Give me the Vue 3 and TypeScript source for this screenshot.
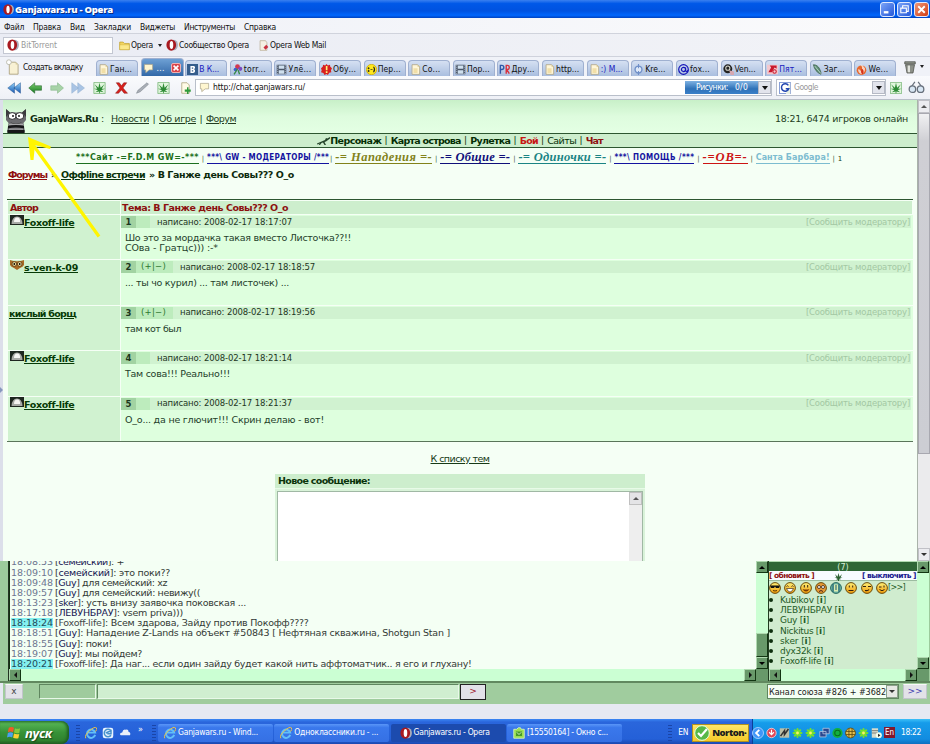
<script setup lang="ts">
type Seg = { t: string; w: number; c?: string }

// Spreads the letters of a label so that it takes exactly the given width.
const vFit = {
  mounted(el: HTMLElement, binding: { value: number }) {
    const n = (el.textContent ?? '').trim().length
    const w = el.getBoundingClientRect().width
    if (n > 0) el.style.letterSpacing = `${(binding.value - w) / n}px`
  },
}

const menu: Seg[] = [
  { t: 'Файл', w: 20 }, { t: 'Правка', w: 28 }, { t: 'Вид', w: 15 }, { t: 'Закладки', w: 37 },
  { t: 'Виджеты', w: 35 }, { t: 'Инструменты', w: 51 }, { t: 'Справка', w: 32 },
]

const tabs: { t: string; icon: string; w: number; c?: string }[] = [
  { t: 'Ган...', icon: 'page', w: 22 }, { t: '...', icon: 'bubble', w: 8, c: 'active' },
  { t: 'В К...', icon: 'vk', w: 20, c: 'unread' }, { t: 'torr...', icon: 'flower', w: 22 },
  { t: 'Улё...', icon: 'film', w: 23 }, { t: 'Обу...', icon: 'alert', w: 23 },
  { t: 'Пер...', icon: 'smile', w: 23 }, { t: 'Со...', icon: 'page', w: 18 },
  { t: 'Пор...', icon: 'film', w: 23 }, { t: 'Дру...', icon: 'pr', w: 23 },
  { t: 'http...', icon: 'page', w: 23 }, { t: ':) M...', icon: 'page', w: 22, c: 'unread' },
  { t: 'Kre...', icon: 'ring', w: 20 }, { t: 'fox...', icon: 'at', w: 20 },
  { t: 'Ven...', icon: 'eye', w: 21 }, { t: 'Пят...', icon: 'redo', w: 23, c: 'unread' },
  { t: 'Заг...', icon: 'feather', w: 21 }, { t: 'We...', icon: 'flame', w: 20 },
]

const nav: Seg[] = [
  { t: 'Персонаж', w: 51 }, { t: 'Карта острова', w: 70 }, { t: 'Рулетка', w: 40 },
  { t: 'Бой', w: 18, c: 'red' }, { t: 'Сайты', w: 29, c: 'thin' }, { t: 'Чат', w: 17, c: 'dred' },
]

const links: Seg[] = [
  { t: '***Сайт -=F.D.M GW=-***', w: 123, c: 'l-green' },
  { t: '***\\ GW - МОДЕРАТОРЫ /***', w: 122, c: 'l-blue tight' },
  { t: '-= Нападения =-', w: 97, c: 'l-olive' },
  { t: '-= Общие =-', w: 70, c: 'l-navy' },
  { t: '-= Одиночки =-', w: 88, c: 'l-teal' },
  { t: '***\\ ПОМОЩЬ /***', w: 80, c: 'l-blue' },
  { t: '-=ОВ=-', w: 45, c: 'l-red' },
  { t: 'Санта Барбара!', w: 74, c: 'l-sky' },
]

const posts: { nick: string; w: number; av: string; vote: boolean; time: string; text: Seg[] }[] = [
  { nick: 'Foxoff-life', w: 50, av: 'hood', vote: false, time: '18:17:07', text: [{ t: 'Шо это за мордачка такая вместо Листочка??!!', w: 226 }, { t: 'СОва - Гратцс))) :-*', w: 93 }] },
  { nick: 's-ven-k-09', w: 54, av: 'owlet', vote: true, time: '18:18:57', text: [{ t: '... ты чо курил) ... там листочек) ...', w: 164 }] },
  { nick: 'кислый борщ', w: 67, av: '', vote: true, time: '18:19:56', text: [{ t: 'там кот был', w: 56 }] },
  { nick: 'Foxoff-life', w: 50, av: 'hood', vote: false, time: '18:21:14', text: [{ t: 'Там сова!!! Реально!!!', w: 105 }] },
  { nick: 'Foxoff-life', w: 50, av: 'hood', vote: false, time: '18:21:37', text: [{ t: 'О_о... да не глючит!!! Скрин делаю - вот!', w: 199 }] },
]

const chat: { time: string; who: string; msg: string; w: number; hi?: boolean }[] = [
  { time: '18:08:53', who: 'семейский', msg: ': +', w: 69 },
  { time: '18:09:10', who: 'семейский', msg: ': это поки??', w: 115 },
  { time: '18:09:48', who: 'Guy', msg: ' для семейский: xz', w: 112 },
  { time: '18:09:57', who: 'Guy', msg: ' для семейский: невижу((', w: 145 },
  { time: '18:13:23', who: 'sker', msg: ': усть внизу заявочка поковская ...', w: 191 },
  { time: '18:17:18', who: 'ЛЕВУНБРАУ', msg: ': vsem priva)))', w: 128 },
  { time: '18:18:24', who: 'Foxoff-life', msg: ': Всем здарова, Зайду против Покофф????', w: 254, hi: true },
  { time: '18:18:51', who: 'Guy', msg: ': Нападение Z-Lands на объект #50843 [ Нефтяная скважина, Shotgun Stan ]', w: 395 },
  { time: '18:18:55', who: 'Guy', msg: ': поки!', w: 57 },
  { time: '18:19:07', who: 'Guy', msg: ': мы пойдем?', w: 87 },
  { time: '18:20:21', who: 'Foxoff-life', msg: ': Да наг... если один зайду будет какой нить аффтоматчик.. я его и глухану!', w: 417, hi: true },
]

const users: Seg[] = [
  { t: 'Kubikov', w: 46 }, { t: 'ЛЕВУНБРАУ', w: 64 }, { t: 'Guy', w: 29 }, { t: 'Nickitus', w: 45 },
  { t: 'sker', w: 31 }, { t: 'dyx32k', w: 43 }, { t: 'Foxoff-life', w: 54 },
]

const smileys = ['cool', 'grin', 'happy', 'cross', 'phones', 'flat', 'sly', 'wink']
const tools = ['rewind', 'back', 'fwd', 'ffwd', 'leaf', 'stop', 'pen', 'leaf', 'newpage']
const tasks: { t: string; icon: string; w: number; c?: string }[] = [
  { t: 'Ganjawars.ru - Wind...', icon: 'ie', w: 80 },
  { t: 'Одноклассники.ru - ...', icon: 'ie', w: 84 },
  { t: 'Ganjawars.ru - Opera', icon: 'opera', w: 76, c: 'on' },
  { t: '[15550164] - Окно с...', icon: 'icq', w: 81 },
]
const tray = ['t-red', 't-bolt', 't-flower', 't-flower', 't-net', 't-swirl', 't-grid', 't-flower', 't-doc']
</script>

<template>
  <div class="screen">
    <svg class="defs" width="0" height="0" aria-hidden="true">
      <defs>
        <linearGradient id="gy" x2="0" y2="1"><stop stop-color="#fff27a" /><stop offset="1" stop-color="#ee9808" /></linearGradient>
        <linearGradient id="gb" x2="0" y2="1"><stop stop-color="#8fd0f8" /><stop offset="1" stop-color="#1858b0" /></linearGradient>
        <linearGradient id="gg" x2="0" y2="1"><stop stop-color="#7fd070" /><stop offset="1" stop-color="#157a20" /></linearGradient>
        <symbol id="opera" viewBox="0 0 16 16"><ellipse cx="10.500" cy="8" rx="5.400" ry="7" fill="#a9aebc" /><ellipse cx="7" cy="8" rx="6.500" ry="7.500" fill="#a81a20" /><ellipse cx="7.300" cy="8" rx="2.400" ry="5.300" fill="#fff" /></symbol>
        <symbol id="folder" viewBox="0 0 16 14"><path d="M1 2h5l2 2h7v9H1z" fill="#f3d560" stroke="#b99b28" /><path d="M1 6h14v7H1z" fill="#fbe88a" stroke="#c4a535" stroke-width=".6" /></symbol>
        <symbol id="mail" viewBox="0 0 16 16"><path d="M3 1h8l2 3v11H3z" fill="#f5f0e4" stroke="#b5a98c" /><path d="M8 11l4-4 3 3-4 4z" fill="#c83040" /></symbol>
        <symbol id="page" viewBox="0 0 16 16"><path d="M3 1h8l3 3v11H3z" fill="#fff6d8" stroke="#a99c78" /><path d="M11 1v3h3z" fill="#d8c890" /><path d="M5 6h6v7H5z" fill="#f1dfa8" /></symbol>
        <symbol id="newtab" viewBox="0 0 16 20"><path d="M4 4h8l3 3v12H4z" fill="#f8f1d4" stroke="#a69b76" /><path d="M12 4v3h3z" fill="#d6ca98" /><circle cx="3.5" cy="4" r="3" fill="#fff" stroke="#b4b4a4" /></symbol>
        <symbol id="bubble" viewBox="0 0 16 16"><path d="M2 2h12v8H9l-5 4v-4H2z" fill="#fff6d0" stroke="#a8a088" /></symbol>
        <symbol id="vk" viewBox="0 0 16 16"><path d="M0 0h16v16H0z" fill="#355d8c" /><path d="M5 3h4c4 0 3 4 1 4.600C13 8.500 12 13 9 13H5zM7 5v2h2V5zM7 9v2h2V9z" fill="#fff" fill-rule="evenodd" /></symbol>
        <symbol id="flower" viewBox="0 0 16 16"><circle cx="8" cy="4" r="3.500" fill="#d23850" /><circle cx="12" cy="7" r="3" fill="#7b4bc0" /><circle cx="5" cy="8" r="2.600" fill="#3c60d0" /><path d="M8 7L3 15M9 9l2 6" stroke="#37884a" stroke-width="2" /></symbol>
        <symbol id="film" viewBox="0 0 16 16"><path d="M1 1h14v14H1z" fill="#4a5668" /><path d="M4 2h8v5H4zM4 9h8v5H4z" fill="#cfe0ee" /><path d="M2.500 1v14M13.500 1v14" stroke="#dde5ee" stroke-dasharray="1.500 1.500" /></symbol>
        <symbol id="alert" viewBox="0 0 16 16"><path d="M8 0l2 2 3-1 .5 3L16 6l-1.500 3 .5 3-3 .8L10 16l-2-1.500L5 16l-1.500-3L0 12l1-3-1-3 2.500-2L3 1l3 1z" fill="#d81f1f" /><path d="M7 3h2.400v6H7zM7 10.500h2.400V13H7z" fill="#fff27a" /></symbol>
        <symbol id="smile" viewBox="0 0 16 16"><circle cx="8" cy="8" r="7.500" fill="#ffe81c" stroke="#c7a400" /><path d="M3 5.500h1.500v1.500H3zM3 9.500h1.500v1.500H3zM6.500 8h3" stroke="#222" fill="#222" /><path d="M11 4q3 4 0 8" fill="none" stroke="#222" stroke-width="1.500" /></symbol>
        <symbol id="ring" viewBox="0 0 16 16"><circle cx="8" cy="8" r="5" fill="#dfe9f8" stroke="#6f8fc8" stroke-width="2" /><path d="M8 0v6M8 10v6" stroke="#6f8fc8" stroke-width="1.600" /></symbol>
        <symbol id="at" viewBox="0 0 16 16"><circle cx="8" cy="8" r="7" fill="none" stroke="#1414b8" stroke-width="1.700" /><circle cx="8" cy="8" r="3" fill="none" stroke="#1414b8" stroke-width="1.700" /><path d="M11 5v5q2 2 4-1" fill="none" stroke="#1414b8" stroke-width="1.700" /></symbol>
        <symbol id="eye" viewBox="0 0 16 16"><circle cx="7" cy="7" r="6.500" fill="#222" /><circle cx="7" cy="6" r="3" fill="none" stroke="#d7d8cc" stroke-width="1.500" /><path d="M9 9l7 2v5h-5z" fill="#d7a7b0" /></symbol>
        <symbol id="redo" viewBox="0 0 16 16"><path d="M0 1h16v14H0z" fill="#f3c8ce" /><path d="M4 2h10v5l-3-2-4 7H2l4-7z" fill="#c8182c" /><circle cx="11" cy="11" r="2.500" fill="none" stroke="#c8182c" stroke-width="1.500" /></symbol>
        <symbol id="feather" viewBox="0 0 16 16"><path d="M2 1q6 0 9 6t2 8Q4 11 2 1z" fill="#5c8f76" stroke="#40604c" /><path d="M4 3l9 11" stroke="#dcebe2" /></symbol>
        <symbol id="flame" viewBox="0 0 16 16"><circle cx="8" cy="9" r="7" fill="#e8682c" /><path d="M6 0q5 5 1 10-2-3-4-2 0 5 5 7 6-3 5-9-3-5-7-6z" fill="#fff" opacity=".7" /><path d="M8 6q5 3 2 9Q6 14 8 6z" fill="#d63018" /></symbol>
        <symbol id="pr" viewBox="0 0 16 16"><path d="M2 14V2h2q3 0 3 3t-3 3H2" fill="none" stroke="#2f58a8" stroke-width="2" /><path d="M10.500 14V2h1.500q3 0 3 3t-3 3h-1l4 6" fill="none" stroke="#d8303c" stroke-width="2" /></symbol>
        <symbol id="rewind" viewBox="0 0 18 16"><path d="M0 8l9-7v14zM8 8l9-7v14z" fill="url(#gb)" stroke="#24508c" stroke-width=".6" /></symbol>
        <symbol id="ffwd" viewBox="0 0 18 16"><path d="M9 8L0 1v14zM17 8L8 1v14z" fill="#a9c4e4" stroke="#8aa9cc" stroke-width=".6" /></symbol>
        <symbol id="back" viewBox="0 0 18 16"><path d="M0 8l8-7v4h9v6H8v4z" fill="url(#gg)" stroke="#206028" stroke-width=".7" /></symbol>
        <symbol id="fwd" viewBox="0 0 18 16"><path d="M17 8L9 1v4H0v6h9v4z" fill="#a7d3a7" stroke="#7fb083" stroke-width=".7" /></symbol>
        <symbol id="leaf" viewBox="0 0 16 16"><path d="M.5.500h15v15H.5z" fill="#e0f6dc" stroke="#70b070" /><path d="M8 1l1.500 6.500L14.500 3l-3.500 6h4.500l-5.500 2 3.500 2.500-5-1V15h-1v-2.500l-5 1L6 11 .5 9H5L1.500 3l5 4.500z" fill="#2c8a34" /></symbol>
        <symbol id="stop" viewBox="0 0 16 16"><path d="M1 1h4l3 4 3-4h4L10 8l6 7h-4.500L8 10.500 4 15H0l6-7z" fill="#d8201c" stroke="#7c1010" stroke-width=".6" /></symbol>
        <symbol id="pen" viewBox="0 0 18 16"><path d="M1 15l2-4L15 1l2 2L6 13z" fill="#a9aeb6" stroke="#777e88" stroke-width=".7" /></symbol>
        <symbol id="newpage" viewBox="0 0 16 16"><path d="M3 1h7l3 3v11H3z" fill="#fffbe6" stroke="#aaa078" /><path d="M10 7v3H7v3h3v3h2v-3h3v-3h-3V7z" fill="#2f9a3a" /></symbol>
        <symbol id="trash" viewBox="0 0 16 18"><path d="M1 2h14v3H1zM2 6h12l-2 11H4z" fill="#8c9088" stroke="#4d504a" /><path d="M5 7h3v9H5z" fill="#e1e3dc" /></symbol>
        <symbol id="glasses" viewBox="0 0 20 16"><path d="M3 8L8 1M17 8L12 1" stroke="#67707c" stroke-width="1.500" fill="none" /><circle cx="5" cy="10" r="4" fill="#d8e7f4" stroke="#67707c" stroke-width="1.600" /><circle cx="15" cy="10" r="4" fill="#d8e7f4" stroke="#67707c" stroke-width="1.600" /></symbol>
        <symbol id="google" viewBox="0 0 16 16"><path d="M.5.500h15v15H.5z" fill="#fff" stroke="#4a6cc0" /><path d="M15 0v16H9z" fill="#e8f0e0" /><path d="M12.500 4.500A5 5 0 1 0 13 9H9" fill="none" stroke="#2347b0" stroke-width="2" /></symbol>
        <symbol id="owl" viewBox="0 0 22 24">
          <path d="M1 0l4 3.500h12L21 0v11l-2.500 3 1.500 9.500H2L3.500 14 1 11z" fill="#6c6c70" />
          <path d="M1 0l4 3.500L1 8zM21 0l-4 3.500L21 8z" fill="#3b3b3e" />
          <path d="M3 17q8-2 16 0v2.500q-8-2-16 0zM2.500 21q8.500-1.500 17 0V24h-17z" fill="#161618" />
          <ellipse cx="7.200" cy="7" rx="4" ry="3.400" fill="#fff" stroke="#2a2a2c" />
          <ellipse cx="14.800" cy="7" rx="4" ry="3.400" fill="#fff" stroke="#2a2a2c" />
          <circle cx="8" cy="7" r=".9" /><circle cx="14" cy="7" r=".9" />
          <path d="M5 13q6 3 12 0-6 5-12 0z" fill="#2c2c2e" /><path d="M4 15.300h14M4 20.200h14" stroke="#b8b8bb" />
        </symbol>
        <symbol id="hood" viewBox="0 0 14 10"><path d="M0 0h14v10H0z" fill="#1d261f" /><path d="M1.500 9Q2 1.500 7 1.500T12.500 9z" fill="#a8aaa6" /><path d="M4 7q0-4.500 3.200-4.500T10 7z" fill="#f5f5f2" /></symbol>
        <symbol id="owlet" viewBox="0 0 14 10"><path d="M0 0l4 1.200h6L14 0v5q-1 2-4 3l-3 2-3-2Q1 7 0 5z" fill="#a86a24" /><circle cx="4.300" cy="4" r="2.300" fill="#f5e9a8" stroke="#55350e" stroke-width=".8" /><circle cx="9.700" cy="4" r="2.300" fill="#f5e9a8" stroke="#55350e" stroke-width=".8" /><circle cx="4.300" cy="4" r=".9" /><circle cx="9.700" cy="4" r=".9" /></symbol>
        <symbol id="gun" viewBox="0 0 13 8"><path d="M0 6.500L8 3l1-2 1.200.6L13 0v1.500L9 4.500 7.500 5 9 8H7.500L6 5.500 4.500 6 3 8H1.500L3 6.500 0 7.500z" fill="#24432a" /></symbol>
        <symbol id="leafbare" viewBox="0 0 16 16"><path d="M8 0l2 7.500L15 2l-3 7 4 0-6 2.500 3 3-4-2V16H7v-3l-4 2 3-3.500L0 9h4L1 2l5 5.500z" fill="#2a6030" /></symbol>
        <symbol id="ie" viewBox="0 0 16 16"><path d="M13.500 10.500A5.500 5.500 0 1 1 13.500 7.500H4" fill="none" stroke="#62c0f8" stroke-width="2.600" /><path d="M1 15Q-1 11 6 5t9-4-1 5" fill="none" stroke="#f2c340" stroke-width="1.300" /></symbol>
        <symbol id="desk" viewBox="0 0 16 16"><rect x="1" y="1" width="14" height="14" rx="3" fill="#e9f4ff" /><path d="M12 5A5 5 0 1 0 12 11M5 8l7-3v4H7" fill="none" stroke="#4791cc" stroke-width="2" /></symbol>
        <symbol id="cloud" viewBox="0 0 16 10"><path d="M2 9q-3-3 2-4 1-5 5-4 4-1 4 3 4 1 2 5z" fill="#e8effa" /></symbol>
        <symbol id="icq" viewBox="0 0 16 16"><path d="M1 3h4l2-2h3l1 2h4v12H1z" fill="#9ade50" stroke="#e6ffc4" /><path d="M4 6h8v6H4z" fill="#459b24" /><path d="M5 7l3 3 3-3" stroke="#fff" fill="none" /></symbol>
        <symbol id="winlogo" viewBox="0 0 16 16"><path d="M2 2q3-2 6 0L7 7Q4 5.500 1 7z" fill="#f05a28" /><path d="M9 2.500q3 1.500 6 0L14 8q-3 1-6-.5z" fill="#84c83c" /><path d="M1 8q3-1.500 6 0l-1 5q-3-1.500-6 0z" fill="#4aa0f0" /><path d="M8 8.500q3 1.500 6 .5l-1 5q-3 1-6-.5z" fill="#fcd030" /></symbol>
        <symbol id="cool" viewBox="0 0 12 12"><circle cx="6" cy="6" r="5.400" fill="url(#gy)" stroke="#6c4a08" /><path d="M1 3.500h10l-1 2.500H7L6 4.500 5 6H2z" fill="#111" /><path d="M4 8.500q2 1 4 0" fill="none" stroke="#5c3400" /></symbol>
        <symbol id="grin" viewBox="0 0 12 12"><circle cx="6" cy="6" r="5.400" fill="url(#gy)" stroke="#6c4a08" /><path d="M2.500 4.500q1-1.500 2 0M7.500 4.500q1-1.500 2 0" fill="none" stroke="#432" /><path d="M2.500 6.500h7Q8 10 6 10T2.500 6.500z" fill="#fff" stroke="#432" stroke-width=".7" /></symbol>
        <symbol id="happy" viewBox="0 0 12 12"><circle cx="6" cy="6" r="5.400" fill="url(#gy)" stroke="#6c4a08" /><path d="M4.300 3v2.500M7.700 3v2.500" stroke="#321" /><path d="M2.500 7q3.500 1 7 0Q8 9.500 6 9.500T2.500 7z" fill="#7a3a00" /></symbol>
        <symbol id="cross" viewBox="0 0 12 12"><circle cx="6" cy="6" r="5.400" fill="#e89a34" stroke="#6c4a08" /><circle cx="4" cy="5" r="1.500" fill="#fff" stroke="#321" stroke-width=".8" /><circle cx="8" cy="5" r="1.500" fill="#fff" stroke="#321" stroke-width=".8" /><path d="M4 9.500q2-2 4 0" fill="none" stroke="#422" /></symbol>
        <symbol id="phones" viewBox="0 0 12 12"><circle cx="6" cy="6" r="5.400" fill="#70b8a8" stroke="#24665c" /><path d="M4 2.500h4v7H4z" fill="#d8ecb0" /><path d="M3 2v8M9 2v8M6 3v5" stroke="#1c5868" /></symbol>
        <symbol id="flat" viewBox="0 0 12 12"><circle cx="6" cy="6" r="5.400" fill="url(#gy)" stroke="#6c4a08" /><path d="M4.300 3.500v2M7.700 3.500v2M3.500 8.500h5" stroke="#321" /></symbol>
        <symbol id="sly" viewBox="0 0 12 12"><circle cx="6" cy="6" r="5.400" fill="url(#gy)" stroke="#6c4a08" /><path d="M2 4.500h3M7 4.500h3M4 8.500q3 .5 4-1" fill="none" stroke="#321" stroke-width="1.200" /></symbol>
        <symbol id="wink" viewBox="0 0 12 12"><circle cx="6" cy="6" r="5.400" fill="url(#gy)" stroke="#6c4a08" /><path d="M3 5h2.500M8 3.500v2M3.500 7.500Q6 10 8.500 7.500" fill="none" stroke="#321" /></symbol>
        <symbol id="t-red" viewBox="0 0 14 14"><circle cx="7" cy="7" r="6" fill="#e04858" stroke="#fbd8dc" /><path d="M7 3v5M4 6l3 3 3-3" stroke="#fff" stroke-width="1.500" fill="none" /></symbol>
        <symbol id="t-bolt" viewBox="0 0 14 14"><path d="M1 1h12v12H1z" fill="#bcc0a8" /><path d="M2 11l5-7v5l5-7" fill="none" stroke="#333" stroke-width="2" /></symbol>
        <symbol id="t-flower" viewBox="0 0 14 14"><g stroke="#75e02c" stroke-width="2.600" stroke-linecap="round"><path d="M7 2v10M2 7h10M3.500 3.500l7 7M10.500 3.500l-7 7" /></g><circle cx="7" cy="7" r="1.800" fill="#f8f06c" /></symbol>
        <symbol id="t-net" viewBox="0 0 14 14"><path d="M5 1h8v7H5zM1 5h8v7H1z" fill="#2a4890" stroke="#b8c8e0" /></symbol>
        <symbol id="t-swirl" viewBox="0 0 14 14"><circle cx="7" cy="7" r="6.500" fill="#13b040" /><circle cx="7" cy="7" r="3.500" fill="none" stroke="#0a6c20" stroke-width="1.300" /></symbol>
        <symbol id="t-grid" viewBox="0 0 14 14"><circle cx="7" cy="7" r="6.300" fill="#e4c050" stroke="#5c4408" /><path d="M1 5h12M1 9h12M5 1v12M9 1v12" stroke="#5c4408" /></symbol>
        <symbol id="t-doc" viewBox="0 0 14 14"><path d="M1 1h8v12H1z" fill="#d8dccc" /><path d="M1 4h8M1 7h8" stroke="#666" /><circle cx="10" cy="10" r="3.800" fill="#f4fff0" /><path d="M9 8l3 2-3 2z" fill="#222" /></symbol>
      </defs>
    </svg>

    <header class="title">
      <svg class="i11"><use href="#opera" /></svg>
      <b v-fit="98">Ganjawars.ru - Opera</b>
      <div class="winbtns">
        <i class="wb"><svg viewBox="0 0 14 14"><path d="M3 10h5" stroke="#fff" stroke-width="2.500" /></svg></i>
        <i class="wb"><svg viewBox="0 0 14 14"><path d="M5 5V3h6v6H9M3 5.500h6v5H3z" fill="none" stroke="#fff" stroke-width="1.200" /></svg></i>
        <i class="wb close"><svg viewBox="0 0 14 14"><path d="M3.500 3.500l7 7M10.500 3.500l-7 7" stroke="#fff" stroke-width="2" /></svg></i>
      </div>
    </header>

    <nav class="menu"><span v-for="m in menu" :key="m.t" v-fit="m.w">{{ m.t }}</span></nav>

    <div class="bookmarks">
      <div class="bt"><svg class="i12"><use href="#opera" /></svg><span v-fit="36">BitTorrent</span></div>
      <svg class="i11"><use href="#folder" /></svg><span v-fit="22">Opera</span><i class="caret bm" />
      <svg class="i12 gap"><use href="#opera" /></svg><span v-fit="70">Сообщество Opera</span>
      <svg class="i11 gap2"><use href="#mail" /></svg><span v-fit="56">Opera Web Mail</span>
    </div>

    <div class="tabbar">
      <svg class="nt"><use href="#newtab" /></svg><span v-fit="64" class="ntt">Создать вкладку</span>
      <div class="tabs">
        <div v-for="(tb, i) in tabs" :key="i" class="tab" :class="tb.c">
          <svg class="i11"><use :href="'#' + tb.icon" /></svg><span v-fit="tb.w">{{ tb.t }}</span>
          <i v-if="tb.c === 'active'" class="tx"><svg viewBox="0 0 10 10"><path d="M2 2l6 6M8 2L2 8" stroke="#fff" stroke-width="2" /></svg></i>
        </div>
      </div>
      <svg class="trash"><use href="#trash" /></svg><i class="caret" />
    </div>

    <div class="address">
      <div class="tools"><span v-for="(n, i) in tools" :key="i"><svg><use :href="'#' + n" /></svg></span></div>
      <div class="url">
        <svg class="i11"><use href="#bubble" /></svg><span v-fit="92">http://chat.ganjawars.ru/</span>
        <div class="pics"><span v-fit="32">Рисунки:</span><span v-fit="13">0/0</span></div><i class="drop" />
      </div>
      <div class="search"><svg class="i12"><use href="#google" /></svg><span v-fit="24">Google</span><i class="drop" /></div>
      <svg class="i12 lf"><use href="#leaf" /></svg><svg class="gl"><use href="#glasses" /></svg>
    </div>

    <div class="view">
      <div class="split"><i /></div>
      <main class="page">
        <div class="head">
          <svg class="owl"><use href="#owl" /></svg>
          <b v-fit="68">GanjaWars.Ru</b><span class="colon">:</span>
          <u v-fit="38">Новости</u><s>|</s><u v-fit="37">Об игре</u><s>|</s><u v-fit="30">Форум</u>
          <span v-fit="133" class="online">18:21, 6474 игроков онлайн</span>
        </div>
        <div class="nav">
          <svg class="gun"><use href="#gun" /></svg>
          <template v-for="(n, i) in nav" :key="n.t"><s v-if="i">|</s><b v-fit="n.w" :class="n.c">{{ n.t }}</b></template>
        </div>
        <div class="links">
          <template v-for="l in links" :key="l.t"><a v-fit="l.w" :class="l.c">{{ l.t }}</a><s>|</s></template>
          <span class="one">1</span>
        </div>
        <div class="crumbs">
          <u v-fit="39" class="dred">Форумы</u><span class="raq">»</span><u v-fit="84">Оффline встречи</u><span v-fit="145" class="last">» В Ганже день Совы??? О_о</span>
        </div>
        <section class="topic">
          <div class="row th"><div class="left"><b v-fit="28">Автор</b></div><div class="right"><b v-fit="166">Тема: В Ганже день Совы??? О_о</b></div></div>
          <div v-for="(p, i) in posts" :key="i" class="row post">
            <div class="left"><svg v-if="p.av" class="av"><use :href="'#' + p.av" /></svg><u v-fit="p.w">{{ p.nick }}</u></div>
            <div class="right">
              <div class="meta">
                <b class="num">{{ i + 1 }}</b>
                <span class="vote" :class="{ wide: p.vote }"><span v-if="p.vote" v-fit="25">(+|−)</span></span>
                <span v-fit="135" class="date">написано: 2008-02-17 {{ p.time }}</span>
                <span v-fit="104" class="mod">[Сообщить модератору]</span>
              </div>
              <div class="text"><div v-for="t in p.text" :key="t.t"><span v-fit="t.w">{{ t.t }}</span></div></div>
            </div>
          </div>
        </section>
        <div class="back"><u v-fit="59">К списку тем</u></div>
        <div class="reply">
          <div class="rh"><b v-fit="92">Новое сообщение:</b></div>
          <div class="ta"><div class="tsb"><i><b class="up" /></i></div></div>
        </div>
      </main>
      <div class="vsb"><i class="sbtn"><b class="up" /></i><i class="thumb" /><i class="sbtn"><b class="dn" /></i></div>
      <svg class="pointer" viewBox="0 0 80 110"><path d="M75 105.500L7 11" fill="none" stroke="#fff500" stroke-width="3.200" /><path d="M4 6l23 9.500-1 2.500-15-4-1.500 15H6.500z" fill="#fff500" /></svg>
    </div>

    <div class="frames">
      <div class="edge" />
      <section class="chat">
        <div class="body">
          <div class="log">
            <div v-for="c in chat" :key="c.time" class="line">
              <span v-fit="42" class="tm" :class="{ hi: c.hi }">{{ c.time }}</span>
              <span v-fit="c.w" class="msg">[<em :class="{ me: c.hi }">{{ c.who }}</em>]{{ c.msg }}</span>
            </div>
          </div>
          <div class="gsb"><i class="gb"><b class="up" /></i><i class="fill" /><i class="gb gth" /><i class="gb"><b class="dn" /></i></div>
        </div>
        <div class="hsb"><i class="gb"><b class="lt" /></i><i class="fill" /><i class="gb"><b class="rt" /></i><i class="corner" /></div>
      </section>
      <section class="people">
        <div class="body">
          <div class="plist">
            <div class="cnt">(7)</div>
            <div class="ctl"><b v-fit="45" class="dred">[ обновить ]</b><svg><use href="#leafbare" /></svg><b v-fit="54" class="blue">[ выключить ]</b></div>
            <div class="smi"><svg v-for="s in smileys" :key="s"><use :href="'#' + s" /></svg><span v-fit="17">[&gt;&gt;]</span></div>
            <div v-for="u in users" :key="u.t" class="usr"><i /><span v-fit="u.w">{{ u.t }} [<b>i</b>]</span></div>
          </div>
          <div class="gsb"><i class="gb"><b class="up" /></i><i class="fill" /><i class="gb"><b class="dn" /></i></div>
        </div>
        <div class="hsb"><i class="gb"><b class="lt" /></i><i class="fill" /><i class="gb"><b class="rt" /></i><i class="corner" /></div>
      </section>
    </div>

    <div class="sendbar">
      <span class="btn bx">x</span><span class="inp to" /><span class="inp msgin" /><span class="btn go">&gt;</span>
      <span class="sel"><span v-fit="117">Канал союза #826 + #3682</span><i><b class="dn" /></i></span><span class="btn more">&gt;&gt;</span>
    </div>

    <footer class="taskbar">
      <div class="start"><svg><use href="#winlogo" /></svg><b v-fit="27">пуск</b></div>
      <div class="quick"><i class="grip" /><svg><use href="#ie" /></svg><svg><use href="#desk" /></svg><svg class="cl"><use href="#cloud" /></svg><span>»</span><i class="grip" /></div>
      <div v-for="t in tasks" :key="t.t" class="task" :class="t.c"><svg><use :href="'#' + t.icon" /></svg><span v-fit="t.w">{{ t.t }}</span></div>
      <i class="grip far" /><span v-fit="10" class="lang">EN</span>
      <div class="norton"><svg viewBox="0 0 16 16"><circle cx="8" cy="8" r="7.300" fill="#58b848" stroke="#e8ffe0" /><path d="M4 8l3 3 6-7" fill="none" stroke="#fff" stroke-width="2.200" /></svg><b v-fit="34">Norton·</b></div>
      <div class="tray">
        <i class="hide"><svg viewBox="0 0 8 8"><path d="M5 1.500L2.500 4 5 6.500" fill="none" stroke="#fff" stroke-width="1.500" /></svg></i>
        <svg v-for="(t, i) in tray" :key="i"><use :href="'#' + t" /></svg>
        <span class="en">En</span><span v-fit="20" class="clock">18:22</span>
      </div>
    </footer>
  </div>
</template>

<style>
body { background: #eceef5; overflow: hidden; }
</style>

<style scoped>
.screen { width: 930px; height: 744px; display: flex; flex-direction: column; font: 8.5px/11px "DejaVu Sans Condensed", "DejaVu Sans", sans-serif; color: #111; overflow: hidden; white-space: nowrap; background: #e6e9f2; }
.screen * { box-sizing: border-box; }
.defs { position: absolute; }
span, b, u, a { display: inline-block; flex: none; }
svg { display: block; flex: none; }
i { display: block; flex: none; font-style: normal; }
s { text-decoration: none; }
.i11 { width: 11px; height: 11px; }
.i12 { width: 12px; height: 12px; }
.caret { width: 0; height: 0; border: 2.5px solid transparent; border-top: 3px solid #222; border-bottom: 0; }
.up, .dn { width: 0; height: 0; border: 3px solid transparent; border-bottom: 3px solid #555; border-top: 0; }
.dn { border-bottom: 0; border-top: 3px solid #333; }
.lt, .rt { width: 0; height: 0; border: 3px solid transparent; border-right: 3px solid #111; border-left: 0; }
.rt { border-right: 0; border-left: 3px solid #111; }

.title { height: 18px; flex: none; display: flex; align-items: center; padding: 1px 1px 0 3px; gap: 1px; background: linear-gradient(#3a80f0, #0058e8 20%, #0052e0 60%, #0066fc 85%, #0042c0); color: #fff; font: bold 9.5px/14px "Open Sans", sans-serif; text-shadow: 1px 1px 0 #0a2a80; }
.winbtns { margin-left: auto; display: flex; gap: 2px; }
.wb { width: 15px; height: 15px; border: 1px solid #dfe9ff; border-radius: 3px; background: linear-gradient(135deg, #7ba4f8, #2558d8); }
.wb.close { background: linear-gradient(135deg, #f09878, #d03c14); }

.menu { height: 15px; flex: none; display: flex; gap: 9px; padding: 4px 4px 0; background: linear-gradient(90deg, #eef0f7, #fbfbfc); }
.bookmarks { height: 24px; flex: none; display: flex; align-items: center; padding-left: 3px; gap: 1px; border-top: 1px solid #d0d3dc; border-bottom: 1px solid #cfd2dc; background: linear-gradient(90deg, #eaecf4, #f2f3f7); }
.bt { width: 110px; height: 17px; background: #fff; border: 1px solid #c3c7d2; display: flex; align-items: center; gap: 2px; padding-left: 3px; color: #9a9a9a; margin-right: 5px; }
.bm { margin-left: 4px; }
.gap { margin-left: 3px; }
.gap2 { margin-left: 8px; }

.tabbar { height: 19px; flex: none; display: flex; align-items: center; background: #f0f2f8; }
.nt { width: 13px; height: 16px; margin-left: 6px; }
.ntt { margin-left: 4px; width: 73px; padding-top: 1px; }
.tabs { width: 803px; align-self: flex-end; display: grid; grid-template-columns: repeat(18, 1fr); align-items: end; height: 19px; }
.tab { height: 16px; width: 42px; border: 1px solid #9fb0d0; border-bottom: 0; border-radius: 4px 4px 0 0; background: linear-gradient(#d5e0f2, #a9bedf); display: flex; align-items: center; padding: 1px 0 0 1px; gap: 1px; overflow: hidden; }
.tab.unread { color: #1a1ac0; }
.tab.active { height: 18px; width: 43px; background: linear-gradient(#6ea0d4, #3268a8); color: #fff; gap: 3px; }
.tx { width: 10px; height: 10px; margin-left: 3px; border-radius: 2px; background: #d8444a; border: 1px solid #f0b0b0; }
.trash { width: 12px; height: 14px; margin: 0 4px 0 5px; }

.address { height: 24px; flex: none; display: flex; align-items: center; background: linear-gradient(#fafbfd, #eef0f6); border-bottom: 1px solid #b8bfc8; }
.tools { display: flex; width: 190px; padding-left: 4px; margin-right: 5px; }
.tools span { width: 21.3px; display: flex; justify-content: center; }
.tools svg { width: 15px; height: 12px; }
.url { width: 577px; height: 17px; background: #fff; border: 1px solid #b9bfca; display: flex; align-items: center; padding-left: 3px; gap: 3px; }
.pics { margin-left: auto; width: 73px; height: 13px; background: linear-gradient(#7fb2e2, #2f72b8 60%, #3a80c8); color: #fff; display: flex; align-items: center; gap: 7px; padding-left: 11px; margin-right: -3px; }
.drop { width: 13px; height: 13px; background: #e2e4ec; border: 1px solid #b5b9c4; display: flex; align-items: center; justify-content: center; }
.drop::after { content: ""; border: 3px solid transparent; border-top: 4px solid #111; border-bottom: 0; }
.search { width: 110px; height: 17px; margin-left: 4px; background: #fff; border: 1px solid #b9bfca; display: flex; align-items: center; gap: 3px; padding-left: 2px; color: #9a9a9a; }
.search .drop { margin-left: auto; }
.lf { margin-left: 4px; }
.gl { width: 17px; height: 13px; margin-left: 6px; }

.view { height: 461px; flex: none; display: flex; position: relative; }
.split { width: 3px; background: #dcdfea; }
.split i { margin-top: 287px; width: 0; border: 3px solid transparent; border-left: 3px solid #8797bd; border-right: 0; }
.page { width: 914px; background: #f5fff5; font: 9.5px/11px "DejaVu Sans", sans-serif; color: #163a16; overflow: hidden; }
.head { height: 33px; padding-left: 2px; display: flex; align-items: center; background: linear-gradient(#c8f0c8, #defcde 50%, #e4ffe4); color: #223d22; padding-top: 4px; }
.head b { margin-left: 3px; color: #123012; }
.owl { width: 22px; height: 24px; margin-top: 5px; }
.colon { margin: 0 6px 0 3px; width: 4px; }
.head s { width: 10px; text-align: center; }
.online { margin-left: auto; margin-right: 9px; }
.nav { height: 15px; border-top: 1px solid #2d5630; border-bottom: 1px solid #2d5630; background: #cdeecd; display: flex; justify-content: center; align-items: center; color: #052d05; }
.nav s { width: 9.5px; text-align: center; font-size: 9px; }
.gun { width: 13px; height: 8px; }
.nav .red { color: #c81414; }
.nav .thin { font-weight: normal; }
.dred, .nav .dred { color: #901010; }
.links { height: 19px; padding-left: 73px; display: flex; align-items: center; font-size: 8px; padding-top: 1px; }
.links s { width: 8.1px; text-align: center; color: #446644; font-size: 7px; padding-top: 2px; }
.links a { line-height: 10px; font-weight: bold; border-bottom: 1px solid; height: 11px; }
.links .tight { margin-right: -2px; }
.l-green { color: #1c7020; }
.l-blue { color: #1414a0; font-family: "DejaVu Sans Condensed", sans-serif; }
.links .l-olive, .links .l-navy, .links .l-teal, .links .l-red { font: italic bold 12.5px/9px "Liberation Serif", serif; }
.l-olive { color: #82821a; }
.l-navy { color: #10107a; }
.l-teal { color: #1a8484; }
.l-red { color: #cc1414; }
.links .l-sky { color: #7cbcd0; }
.one { font-size: 7px; padding-top: 2px; }
.crumbs { height: 32px; padding: 2px 0 0 5px; font-weight: bold; display: flex; color: #0a330a; }
.raq { width: 14px; text-align: center; }
.last { margin-left: 4px; color: #0c2a0c; }
.topic { margin: 0 4px 0 4px; border-top: 1px solid #2d5630; border-bottom: 1px solid #5a755a; height: 243px; padding: 1px 0 0 1px; display: flex; flex-direction: column; gap: 1px; }
.row { display: grid; grid-template-columns: 112px 1fr; column-gap: 1px; }
.row.th { height: 13px; }
.th > div { background: #cdeecd; color: #8c1010; padding: 1px 0 0 2px; }
.th .right { padding-left: 1px; margin-right: 1px; }
.post { height: 44.400px; }
.post .left { background: #d0f2d0; padding: 0 0 0 1px; display: flex; align-items: flex-start; }
.post .left u { font-weight: bold; color: #063a06; margin: 2px 0 0 0; }
.av { width: 14px; height: 10px; margin-left: 1px; }
.post .right { background: #deffde; padding-top: 1px; }
.meta { height: 12px; background: #d0f2d0; margin-right: 2px; display: flex; align-items: center; font-size: 8.5px; color: #1d361d; }
.num { width: 15px; height: 12px; line-height: 12px; background: #a2d3a2; text-align: center; }
.vote { width: 14px; height: 12px; background: #bdecbd; padding-left: 5px; color: #2b782f; }
.vote.wide { width: 37px; }
.date { margin-left: 7px; }
.mod { margin-left: auto; margin-right: 1px; color: #a3c8a3; }
.text { padding: 5px 0 0 4px; line-height: 10px; font-size: 9.5px; color: #24402a; }
.text div { height: 10px; }
.back { height: 32px; padding-top: 11px; text-align: center; }
.reply { width: 370px; margin: 0 0 0 272px; background: #d9f3d9; }
.rh { height: 15px; background: #cdeecd; padding: 1px 0 0 3px; border-bottom: 1px solid #e8fbe8; color: #0a330a; }
.ta { margin: 2px 2px 0 2px; height: 78px; background: #fff; border: 1px solid #a0b8a4; display: flex; justify-content: flex-end; }
.tsb { width: 13px; background: #eeeeee; }
.tsb i { width: 13px; height: 13px; background: #e4e4e6; border: 1px solid #c0c0c0; display: flex; align-items: center; justify-content: center; }
.vsb { width: 13px; background: #ebebed; display: flex; flex-direction: column; border-left: 1px solid #a9b3a9; }
.sbtn { height: 13px; background: #ececf0; border: 1px solid #c0c0c6; display: flex; align-items: center; justify-content: center; }
.thumb { height: 341px; margin-bottom: auto; background: linear-gradient(#f0f0f2, #cfcfd4 8%, #cccdd3); border: 1px solid #a8a8b0; }
.pointer { position: absolute; left: 24px; top: 31px; width: 80px; height: 110px; }

.frames { height: 122px; flex: none; display: flex; padding-left: 3px; padding-right: 1px; background: #9ccb9c; border-bottom: 2px solid #61885f; font: 9.5px/10.200px "DejaVu Sans", sans-serif; color: #333a35; }
.edge { width: 6px; background: #9ccb9c; border-right: 1px solid #223322; }
.chat { width: 759px; }
.people { width: 161px; border-left: 1px solid #203c20; }
.body { height: 108px; display: flex; }
.log { width: 747px; border-left: 1px solid #103010; background: #f4fff4; display: flex; flex-direction: column; justify-content: flex-end; overflow: hidden; padding-left: 1px; }
.line { height: 10.150px; flex: none; display: flex; }
.tm { color: #6d7690; margin-right: 2px; }
.tm.hi { background: #84f0f0; color: #1d4a58; }
em { font-style: normal; color: #151550; }
em.me { color: #44484a; }
.gsb { width: 12px; background: #cbffd3; display: flex; flex-direction: column; }
.fill { flex: 1; }
.gb { width: 12px; height: 12px; background: #68996a; border: 1px solid #123512; border-top-color: #b0dab0; border-left-color: #b0dab0; display: flex; align-items: center; justify-content: center; }
.gb .up { border-bottom-color: #000; }
.gb .dn { border-top-color: #000; }
.gth { height: 24px; }
.hsb { height: 12px; display: flex; background: #cbffd3; }
.corner { width: 12px; height: 12px; background: #68996a; }
.plist { width: 148px; background: #d0eccf; overflow: hidden; font-size: 9px; color: #1f5b26; }
.cnt { height: 10px; background: #2f6636; color: #d8f0d8; text-align: center; line-height: 11px; font-size: 8px; border-top: 1px solid #b0dab0; }
.ctl { height: 10px; background: #f7fbff; display: flex; justify-content: space-between; align-items: center; font-size: 7.5px; border-bottom: 1px solid #9cbca0; padding: 2px 1px 0 0; }
.ctl svg { width: 9px; height: 8px; }
.ctl .blue { color: #1a1a90; }
.smi { height: 14px; display: flex; align-items: center; gap: 3.250px; font-size: 8px; }
.smi svg { width: 12px; height: 12px; }
.smi span { margin-left: -3px; }
.usr { height: 10.200px; display: flex; align-items: center; }
.usr i { width: 4px; height: 4px; border-radius: 50%; background: #0d300d; margin: 0 7px 0 0; }

.sendbar { height: 21px; flex: none; display: flex; margin-left: 3px; padding-left: 2px; background: #a0cc9e; font: 9px/14px "DejaVu Sans", sans-serif; align-items: flex-start; padding-top: 1px; }
.btn { background: #e2e2e8; border: 1px solid #c2c6cc; border-top-color: #f8f8f8; text-align: center; height: 15px; line-height: 13px; color: #444; }
.bx { width: 18px; margin-right: 16px; }
.inp { height: 15px; border: 1px solid #5f865f; border-right-color: #e8f8e8; border-bottom-color: #e8f8e8; }
.to { width: 57px; margin-right: 1px; background: #9fcb9d; }
.msgin { width: 362px; background: #d0eed0; margin-right: 1px; }
.btn.go { width: 26px; height: 16px; border: 1px solid #222; color: #a02030; }
.sel { margin-left: 281px; width: 132px; height: 15px; background: #f5fff5; border: 1px solid #5f865f; padding-left: 1px; display: flex; line-height: 14px; color: #222; font-family: "DejaVu Sans Condensed", sans-serif; }
.sel i { margin-left: auto; width: 12px; background: #e6e8e4; border: 1px solid #8ca08c; display: flex; align-items: center; justify-content: center; }
.btn.more { margin-left: 4px; width: 24px; color: #4040b0; }

.taskbar { height: 25px; margin-top: auto; flex: none; display: flex; background: linear-gradient(#3a86f4, #2a66dc 12%, #2460d8 80%, #1b48b0); color: #fff; align-items: center; padding-top: 2px; }
.start { width: 69px; height: 23px; background: linear-gradient(#3c8c3c, #52b050 12%, #379237 50%, #2f822f 85%, #256225); border-radius: 0 8px 8px 0; display: flex; align-items: center; padding: 0 0 0 7px; gap: 4px; box-shadow: inset -2px 0 3px #1d5c20; }
.start svg { width: 14px; height: 14px; }
.start b { font: italic bold 13px/16px "Open Sans", sans-serif; text-shadow: 1px 1px 1px #1b4b1b; }
.quick { width: 89px; display: flex; align-items: center; padding-left: 7px; gap: 5px; }
.quick svg { width: 12px; height: 12px; }
.quick .cl { height: 7px; }
.quick span { margin: -7px 1px 0 2px; font-size: 9px; width: 8px; }
.quick .grip:last-child { margin-left: 0; }
.grip { width: 4px; height: 16px; background: repeating-linear-gradient(#1a45a8 0 1px, transparent 1px 3px); }
.task { width: 115px; height: 18px; margin-right: 1.300px; background: linear-gradient(#5a96f8, #3a78ec 20%, #3570e4); border-radius: 2px; display: flex; align-items: center; gap: 2px; padding-left: 6px; font-size: 8.500px; }
.task.on { background: #1c4bae; padding-left: 9px; }
.task svg { width: 12px; height: 12px; }
.far { margin-left: 45px; margin-right: 6px; }
.lang { margin-right: 4px; }
.norton { width: 57px; height: 18px; border: 1px solid #b09020; background: linear-gradient(#ffe668, #f5c928); color: #1c1c1c; display: flex; align-items: center; gap: 2px; padding-left: 1px; font: 600 9.5px/14px "Open Sans", sans-serif; }
.norton svg { width: 16px; height: 16px; }
.tray { flex: 1; align-self: stretch; margin: -2px 0 0 3px; padding-top: 2px; background: linear-gradient(#3cc0f8, #169cea 15%, #128ce0 80%, #0f6fc0); border-left: 1px solid #0c3f98; display: flex; align-items: center; gap: 2px; }
.tray svg { width: 11px; height: 12px; }
.tray > svg + svg { margin-left: .1px; }
.hide { width: 12px; height: 12px; border-radius: 50%; background: #3f96f8; border: 1px solid #9ccaff; margin: 0 0 0 -1px; }
.tray .hide svg { width: 10px; height: 10px; }
.en { background: #84182c; width: 11px; height: 11px; text-align: center; font-size: 8px; line-height: 11px; }
.clock { margin-left: 4px; }
</style>
